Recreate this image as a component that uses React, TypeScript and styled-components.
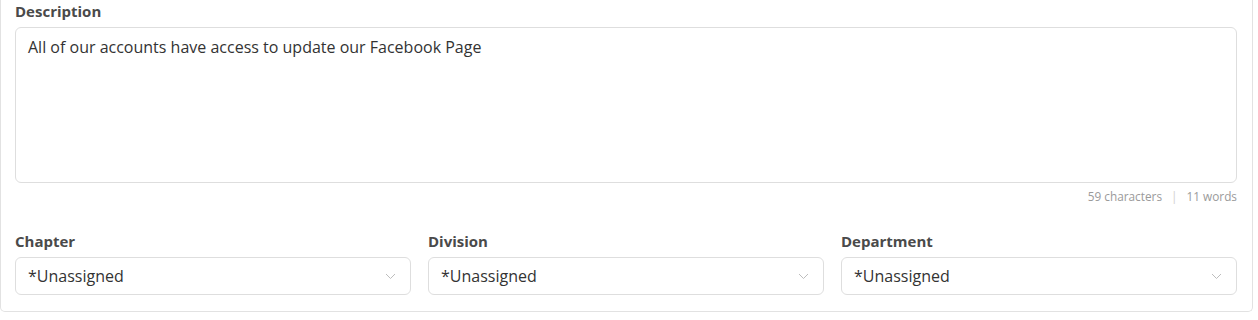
import styled, { createGlobalStyle } from 'styled-components';

const GlobalStyle = createGlobalStyle`
    body {
        margin: 0;
        background: #ffffff;
        font-family: "Open Sans", Lato, sans-serif;
    }
`;

const Card = styled.div`
    width: 1253px;
    box-sizing: border-box;
    padding: 3px 15px 16px 14px;
    border: 1px solid #e2e2e2;
    border-top: none;
    border-radius: 0 0 5px 5px;
    background: #fff;
`;

const Label = styled.label`
    display: block;
    font-size: 15px;
    font-weight: 700;
    color: #4a4a4a;
    margin-bottom: 7px;
    line-height: 17px;
`;

const TextArea = styled.div`
    height: 156px;
    box-sizing: border-box;
    border: 1px solid #dedede;
    border-radius: 6px;
    padding: 9px 12px;
    font-size: 16px;
    color: #333;
    line-height: 20px;
`;

const Counter = styled.div`
    display: flex;
    justify-content: flex-end;
    align-items: center;
    gap: 9px;
    margin-top: 6px;
    font-size: 11.8px;
    color: #9a9a9a;
    line-height: 15px;
`;

const Divider = styled.span`
    color: #d0d0d0;
`;

const FieldRow = styled.div`
    display: grid;
    grid-template-columns: repeat(3, 1fr);
    gap: 17px;
    margin-top: 29px;
`;

const Field = styled.div`
    display: flex;
    flex-direction: column;
`;

const Select = styled.div`
    height: 38px;
    box-sizing: border-box;
    border: 1px solid #dedede;
    border-radius: 6px;
    padding: 0 14px 0 12px;
    display: flex;
    align-items: center;
    justify-content: space-between;
    font-size: 16px;
    color: #333;
`;

function Chevron() {
    return (
        <svg width="11" height="7" viewBox="0 0 11 7" fill="none">
            <path d="M1 1l4.5 4.5L10 1" stroke="#bdbdbd" strokeWidth="1" />
        </svg>
    );
}

const fields = ['Chapter', 'Division', 'Department'];

export default function App() {
    return (
        <>
            <GlobalStyle />
            <Card>
                <Label>Description</Label>
                <TextArea>All of our accounts have access to update our Facebook Page</TextArea>
                <Counter>
                    <span>59 characters</span>
                    <Divider>|</Divider>
                    <span>11 words</span>
                </Counter>
                <FieldRow>
                    {fields.map((f) => (
                        <Field key={f}>
                            <Label>{f}</Label>
                            <Select>
                                <span>*Unassigned</span>
                                <Chevron />
                            </Select>
                        </Field>
                    ))}
                </FieldRow>
            </Card>
        </>
    );
}
